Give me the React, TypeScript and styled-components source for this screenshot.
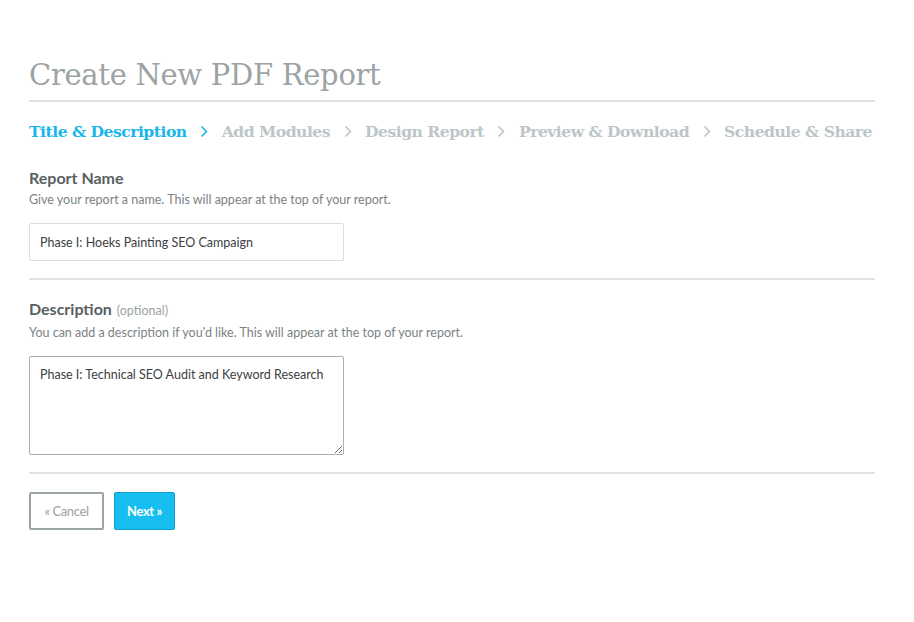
import React, { useEffect, useRef } from "react";
import styled, { createGlobalStyle } from "styled-components";

const GlobalStyle = createGlobalStyle`
  html, body {
    margin: 0;
    padding: 0;
    background: #ffffff;
  }
  body {
    font-family: Lato, "Open Sans", sans-serif;
  }
`;

const Page = styled.div`
  width: 846px;
  padding: 54px 0 0 29px;
`;

const Title = styled.h1`
  margin: 0;
  font-family: "DejaVu Serif", "Liberation Serif", serif;
  font-weight: 300;
  font-size: 29px;
  line-height: 42px;
  color: #9ba3a5;
  letter-spacing: -0.3px;
  padding-bottom: 4px;
  border-bottom: 2px solid #dde3e3;
`;

const Steps = styled.nav`
  display: flex;
  align-items: center;
  height: 58px;
`;

const Step = styled.span<{ $active?: boolean }>`
  font-family: "DejaVu Serif", "Liberation Serif", serif;
  font-weight: 700;
  font-size: 15.6px;
  letter-spacing: -0.5px;
  color: ${(p) => (p.$active ? "#19b6ea" : "#bcc6c8")};
  white-space: nowrap;
`;

const Chevron = styled.span<{ $active?: boolean }>`
  display: inline-flex;
  width: 35px;
  justify-content: center;
  svg {
    stroke: ${(p) => (p.$active ? "#19b6ea" : "#bcc6c8")};
  }
`;

const Section = styled.section<{ $first?: boolean }>`
  padding: ${(p) => (p.$first ? "8px" : "19px")} 0 17px;
  border-bottom: 2px solid #dde3e3;
`;

const Label = styled.div`
  font-size: 16px;
  font-weight: 700;
  color: #595f61;
  line-height: 20px;
`;

const Optional = styled.span`
  font-size: 12.5px;
  font-weight: 400;
  color: #9aa2a4;
  margin-left: 1px;
`;

const Help = styled.p`
  margin: 3px 0 14px;
  font-size: 12.5px;
  color: #7b8284;
  line-height: 18px;
`;

const TextInput = styled.input`
  box-sizing: border-box;
  display: block;
  width: 315px;
  height: 38px;
  padding: 0 10px;
  border: 1px solid #d8dfdf;
  border-radius: 2px;
  font-family: Lato, sans-serif;
  font-size: 12.5px;
  color: #3b4042;
  outline: none;
`;

const TextArea = styled.textarea`
  box-sizing: border-box;
  display: block;
  width: 315px;
  height: 99px;
  padding: 10px 10px;
  border: 1px solid #a9b0b2;
  border-radius: 2px;
  font-family: Lato, sans-serif;
  font-size: 12.5px;
  line-height: 16px;
  color: #3b4042;
  outline: none;
  resize: both;
  caret-color: #222;
`;

const Actions = styled.div`
  display: flex;
  gap: 10px;
  padding-top: 18px;
`;

const Button = styled.button<{ $primary?: boolean }>`
  box-sizing: border-box;
  height: 38px;
  padding: 0;
  font-family: Lato, sans-serif;
  font-size: 13px;
  font-weight: ${(p) => (p.$primary ? 700 : 400)};
  letter-spacing: -0.4px;
  border-radius: 2px;
  cursor: pointer;
  color: ${(p) => (p.$primary ? "#ffffff" : "#9aa2a4")};
  background: ${(p) => (p.$primary ? "#17bff0" : "#ffffff")};
  border: ${(p) => (p.$primary ? "1px solid #109ccc" : "2px solid #9aa3a5")};
  width: ${(p) => (p.$primary ? "61px" : "75px")};
`;

const steps = [
  "Title & Description",
  "Add Modules",
  "Design Report",
  "Preview & Download",
  "Schedule & Share",
];

const ChevronIcon = () => (
  <svg width="8" height="13" viewBox="0 0 8 13" fill="none" strokeWidth="1.6">
    <path d="M1.5 1.5 L6.5 6.5 L1.5 11.5" />
  </svg>
);

export default function App() {
  const descRef = useRef<HTMLTextAreaElement>(null);

  useEffect(() => {
    const el = descRef.current;
    if (el) {
      el.focus();
      el.setSelectionRange(el.value.length, el.value.length);
    }
  }, []);

  return (
    <>
      <GlobalStyle />
      <Page>
        <Title>Create New PDF Report</Title>
        <Steps>
          {steps.map((s, i) => (
            <React.Fragment key={s}>
              <Step $active={i === 0}>{s}</Step>
              {i < steps.length - 1 && (
                <Chevron $active={i === 0}>
                  <ChevronIcon />
                </Chevron>
              )}
            </React.Fragment>
          ))}
        </Steps>
        <Section $first>
          <Label>Report Name</Label>
          <Help>Give your report a name. This will appear at the top of your report.</Help>
          <TextInput defaultValue="Phase I: Hoeks Painting SEO Campaign" />
        </Section>
        <Section>
          <Label>
            Description <Optional>(optional)</Optional>
          </Label>
          <Help>You can add a description if you'd like. This will appear at the top of your report.</Help>
          <TextArea ref={descRef} defaultValue="Phase I: Technical SEO Audit and Keyword Research" />
        </Section>
        <Actions>
          <Button>« Cancel</Button>
          <Button $primary>Next »</Button>
        </Actions>
      </Page>
    </>
  );
}
